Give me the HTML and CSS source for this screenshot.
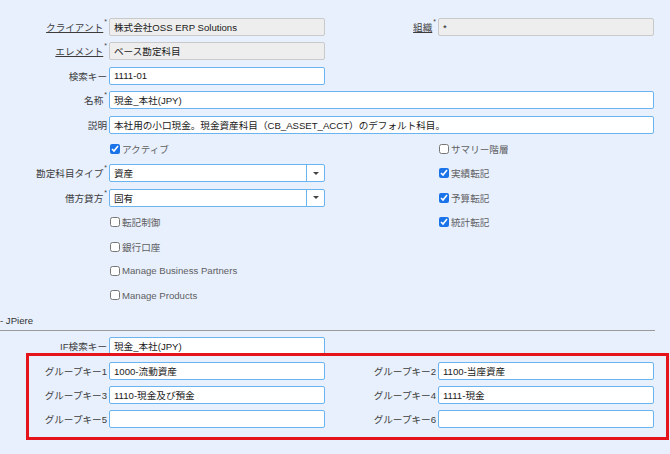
FILE: index.html
```html
<!DOCTYPE html>
<html lang="ja">
<head>
<meta charset="utf-8">
<link rel="stylesheet" href="styles.css">
</head>
<body>
<div class="page">
  <div class="grid">
    <div class="lbl"><span class="link">クライアント</span><sup class="req">*</sup></div>
    <div class="field"><div class="inp ro">株式会社OSS ERP Solutions</div></div>
    <div class="lbl"><span class="link">組織</span><sup class="req">*</sup></div>
    <div class="field"><div class="inp ro">*</div></div>

    <div class="lbl"><span class="link">エレメント</span><sup class="req">*</sup></div>
    <div class="field"><div class="inp ro">ベース勘定科目</div></div>
    <div class="lbl"></div><div></div>

    <div class="lbl">検索キー</div>
    <div class="field"><div class="inp">1111-01</div></div>
    <div class="lbl"></div><div></div>

    <div class="lbl">名称<sup class="req">*</sup></div>
    <div class="field wide"><div class="inp">現金_本社(JPY)</div></div>

    <div class="lbl">説明</div>
    <div class="field wide"><div class="inp">本社用の小口現金。現金資産科目（CB_ASSET_ACCT）のデフォルト科目。</div></div>

    <div class="lbl"></div>
    <label class="chk"><input type="checkbox" checked><span>アクティブ</span></label>
    <div class="lbl"></div>
    <label class="chk"><input type="checkbox"><span>サマリー階層</span></label>

    <div class="lbl">勘定科目タイプ<sup class="req">*</sup></div>
    <div class="field"><div class="inp sel"><span class="val">資産</span><span class="btn"><i class="arrow"></i></span></div></div>
    <div class="lbl"></div>
    <label class="chk"><input type="checkbox" checked><span>実績転記</span></label>

    <div class="lbl">借方貸方<sup class="req">*</sup></div>
    <div class="field"><div class="inp sel"><span class="val">固有</span><span class="btn"><i class="arrow"></i></span></div></div>
    <div class="lbl"></div>
    <label class="chk"><input type="checkbox" checked><span>予算転記</span></label>

    <div class="lbl"></div>
    <label class="chk"><input type="checkbox"><span>転記制御</span></label>
    <div class="lbl"></div>
    <label class="chk"><input type="checkbox" checked><span>統計転記</span></label>

    <div class="lbl"></div>
    <label class="chk"><input type="checkbox"><span>銀行口座</span></label>
    <div class="lbl"></div><div></div>

    <div class="lbl"></div>
    <label class="chk"><input type="checkbox"><span>Manage Business Partners</span></label>
    <div class="lbl"></div><div></div>

    <div class="lbl"></div>
    <label class="chk"><input type="checkbox"><span>Manage Products</span></label>
    <div class="lbl"></div><div></div>
  </div>

  <div class="section">- JPiere</div>

  <div class="grid if-grid">
    <div class="lbl">IF検索キー</div>
    <div class="field"><div class="inp">現金_本社(JPY)</div></div>
    <div class="lbl"></div><div></div>
  </div>

  <div class="grid group">
    <div class="highlight"></div>
    <div class="lbl">グループキー1</div>
    <div class="field"><div class="inp">1000-流動資産</div></div>
    <div class="lbl">グループキー2</div>
    <div class="field"><div class="inp">1100-当座資産</div></div>

    <div class="lbl">グループキー3</div>
    <div class="field"><div class="inp">1110-現金及び預金</div></div>
    <div class="lbl">グループキー4</div>
    <div class="field"><div class="inp">1111-現金</div></div>

    <div class="lbl">グループキー5</div>
    <div class="field"><div class="inp"></div></div>
    <div class="lbl">グループキー6</div>
    <div class="field"><div class="inp"></div></div>
  </div>
</div>
</body>
</html>
```
FILE: styles.css
```css
html, body {
  margin: 0;
  padding: 0;
  background: #e8f0fe;
}
body {
  font-family: "Liberation Sans", "Noto Sans CJK JP", sans-serif;
  font-size: 9.6px;
  color: #333;
}
.page {
  width: 670px;
  height: 454px;
  padding-top: 18px;
  box-sizing: border-box;
  overflow: hidden;
}
.grid {
  display: grid;
  grid-template-columns: 109px 216px 113px 216px;
  grid-auto-rows: 18px;
  row-gap: 6.4px;
  width: 654px;
}
.lbl {
  display: flex;
  align-items: center;
  justify-content: flex-end;
  padding-right: 2px;
  color: #3c3c3c;
  white-space: nowrap;
  position: relative;
}
.link {
  text-decoration: underline;
  text-underline-offset: 1px;
  color: #3c3c3c;
}
.req {
  font-size: 7px;
  align-self: flex-start;
  line-height: 1;
  margin-top: 0;
  margin-left: 1px;
  color: #444;
}
.field {
  display: flex;
}
.field.wide {
  grid-column: 2 / 5;
}
.inp {
  flex: 1;
  height: 18px;
  box-sizing: border-box;
  border: 1px solid #6ab4f2;
  border-radius: 2px;
  background: #fff;
  padding: 0 4px;
  display: flex;
  align-items: center;
  color: #1a1a1a;
  white-space: nowrap;
  overflow: hidden;
}
.inp.ro {
  background: #eeeeee;
  border-color: #c9c9c9;
}
.inp.sel {
  padding-right: 0;
}
.sel .val {
  flex: 1;
}
.sel .btn {
  width: 17px;
  height: 100%;
  border-left: 1px solid #6ab4f2;
  display: flex;
  align-items: center;
  justify-content: center;
}
.arrow {
  width: 0;
  height: 0;
  border-left: 3px solid transparent;
  border-right: 3px solid transparent;
  border-top: 3px solid #444;
}
.chk {
  display: flex;
  align-items: center;
  color: #5f5f5f;
  white-space: nowrap;
}
.chk input {
  width: 10px;
  height: 10px;
  margin: 0 2px 0 1px;
  accent-color: #1a73e8;
}
.section {
  margin-top: 6.4px;
  height: 19px;
  width: 655px;
  display: flex;
  align-items: center;
  border-bottom: 1px solid #9a9a9a;
  color: #333;
}
.if-grid {
  margin-top: 6.6px;
}
.group {
  margin-top: 6.4px;
  position: relative;
}
.highlight {
  position: absolute;
  left: 26px;
  top: -9px;
  width: 643px;
  height: 87px;
  box-sizing: border-box;
  border: 3px solid #e5131b;
  pointer-events: none;
}
```
